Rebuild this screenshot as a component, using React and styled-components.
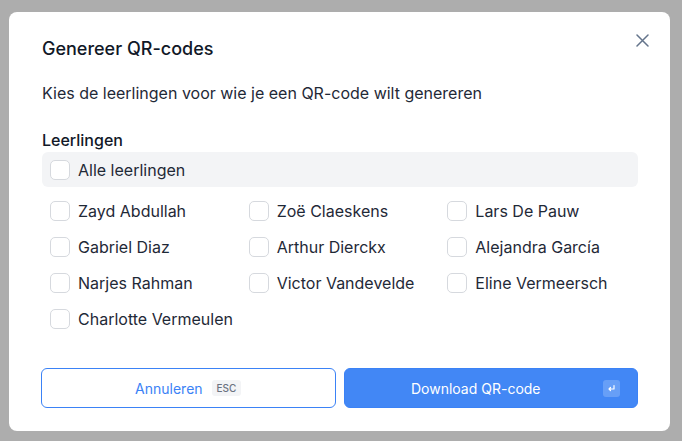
import React from "react";
import styled, { createGlobalStyle } from "styled-components";

const Global = createGlobalStyle`
  html, body { margin: 0; padding: 0; }
  body { font-family: Inter, "Noto Sans", sans-serif; background: #adadad; -webkit-font-smoothing: antialiased; }
  * { box-sizing: border-box; }
`;

const Overlay = styled.div`
  width: 682px;
  height: 441px;
  background: #adadad;
  padding: 12px 12px 10px 9px;
  display: flex;
`;

const Dialog = styled.div`
  position: relative;
  flex: 1;
  background: #fff;
  border-radius: 8px;
  padding: 25px 32px 23px 33px;
  display: flex;
  flex-direction: column;
  color: #111827;
`;

const Close = styled.button`
  position: absolute;
  top: 19px;
  right: 19px;
  width: 18px;
  height: 18px;
  padding: 0;
  border: 0;
  background: none;
  color: #64748b;
  display: flex;
  align-items: center;
  justify-content: center;
`;

const Title = styled.h2`
  margin: 0;
  font-size: 18px;
  line-height: 24px;
  font-weight: 500;
`;

const Subtitle = styled.p`
  margin: 20px 0 0;
  font-size: 16px;
  line-height: 24px;
  color: #1f2937;
`;

const Label = styled.div`
  margin-top: 24px;
  font-size: 16px;
  line-height: 22px;
  font-weight: 500;
`;

const AllRow = styled.label`
  margin-top: 1px;
  height: 35px;
  background: #f3f4f6;
  border-radius: 6px;
  display: flex;
  align-items: center;
  gap: 8px;
  padding: 0 8px;
  font-size: 16px;
  color: #1f2937;
`;

const Box = styled.span`
  width: 20px;
  height: 20px;
  border: 1px solid #d6d9de;
  border-radius: 5px;
  background: #fff;
  flex: none;
`;

const Grid = styled.div`
  margin-top: 6px;
  display: grid;
  grid-template-columns: repeat(3, minmax(0, 1fr));
  grid-auto-rows: 36px;
`;

const Item = styled.label`
  display: flex;
  align-items: center;
  gap: 8px;
  padding: 0 8px;
  font-size: 16px;
  color: #1f2937;
  white-space: nowrap;
`;

const Footer = styled.div`
  margin-top: auto;
  display: grid;
  grid-template-columns: 1fr 1fr;
  gap: 8px;
  margin-left: -1px;
`;

const Button = styled.button`
  height: 40px;
  border-radius: 6px;
  font-family: inherit;
  font-size: 14px;
  font-weight: 400;
  display: flex;
  align-items: center;
  justify-content: center;
  gap: 9px;
  position: relative;
  border: 1px solid #3b82f6;
  padding: ${(p) => (p.$primary ? "0 30px 0 0" : "0")};
  background: ${(p) => (p.$primary ? "#4287f5" : "#fff")};
  color: ${(p) => (p.$primary ? "#fff" : "#3b82f6")};
`;

const Kbd = styled.span`
  font-size: 10px;
  line-height: 16px;
  padding: 0 5px;
  border-radius: 3px;
  background: #f3f4f6;
  color: #6b7280;
  font-weight: 500;
`;

const EnterKey = styled.span`
  position: absolute;
  right: 17px;
  top: 11px;
  width: 17px;
  height: 17px;
  border-radius: 3px;
  background: rgba(255, 255, 255, 0.2);
  display: flex;
  align-items: center;
  justify-content: center;
`;

const students = [
  "Zayd Abdullah",
  "Zoë Claeskens",
  "Lars De Pauw",
  "Gabriel Diaz",
  "Arthur Dierckx",
  "Alejandra García",
  "Narjes Rahman",
  "Victor Vandevelde",
  "Eline Vermeersch",
  "Charlotte Vermeulen",
];

export default function App() {
  return (
    <>
      <Global />
      <Overlay>
        <Dialog>
          <Close aria-label="Sluiten">
            <svg width="13" height="13" viewBox="0 0 13 13" fill="none" stroke="currentColor" strokeWidth="1.5" strokeLinecap="round">
              <path d="M1 1l11 11M12 1L1 12" />
            </svg>
          </Close>
          <Title>Genereer QR-codes</Title>
          <Subtitle>Kies de leerlingen voor wie je een QR-code wilt genereren</Subtitle>
          <Label>Leerlingen</Label>
          <AllRow>
            <Box />
            Alle leerlingen
          </AllRow>
          <Grid>
            {students.map((s) => (
              <Item key={s}>
                <Box />
                {s}
              </Item>
            ))}
          </Grid>
          <Footer>
            <Button>
              Annuleren <Kbd>ESC</Kbd>
            </Button>
            <Button $primary>
              Download QR-code
              <EnterKey>
                <svg width="9" height="9" viewBox="0 0 9 9" fill="none" stroke="#fff" strokeWidth="1.2" strokeLinecap="round" strokeLinejoin="round">
                  <path d="M7 1.5v3.5H2M3.5 3.5L2 5l1.5 1.5" />
                </svg>
              </EnterKey>
            </Button>
          </Footer>
        </Dialog>
      </Overlay>
    </>
  );
}
